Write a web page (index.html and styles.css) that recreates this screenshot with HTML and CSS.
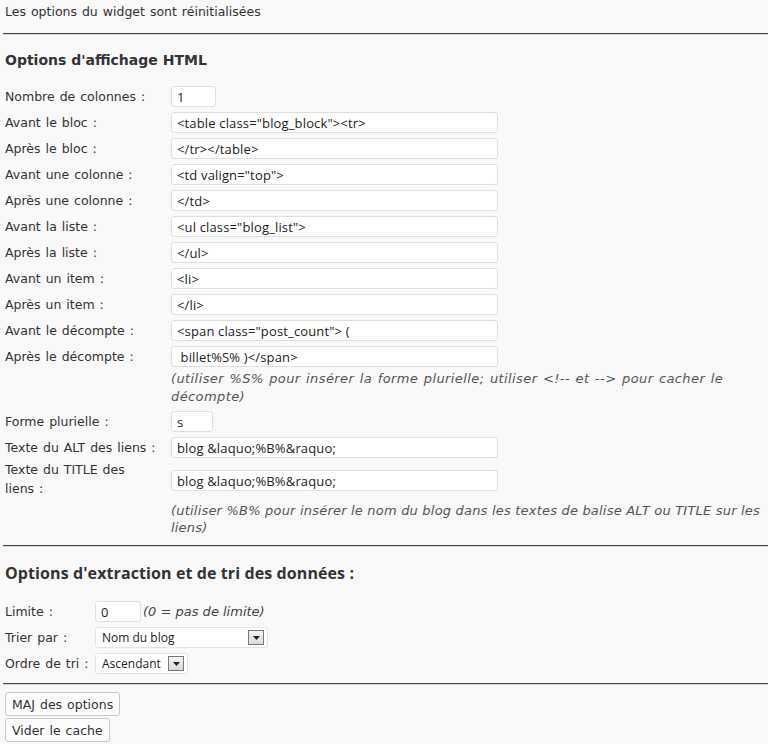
FILE: index.html
```html
<!DOCTYPE html>
<html lang="fr">
<head>
<meta charset="utf-8">
<title>Options du widget</title>
<link rel="stylesheet" href="styles.css">
</head>
<body>
<div class="page">
  <p class="notice">Les options du widget sont réinitialisées</p>
  <hr class="sep">
  <h2 class="h-main">Options d'affichage HTML</h2>
  <div class="grid grid-html">
    <label class="lbl">Nombre de colonnes :</label>
    <div class="fld"><span class="inp inp-xs">1</span></div>
    <label class="lbl">Avant le bloc :</label>
    <div class="fld"><span class="inp inp-wide">&lt;table class="blog_block"&gt;&lt;tr&gt;</span></div>
    <label class="lbl">Après le bloc :</label>
    <div class="fld"><span class="inp inp-wide">&lt;/tr&gt;&lt;/table&gt;</span></div>
    <label class="lbl">Avant une colonne :</label>
    <div class="fld"><span class="inp inp-wide">&lt;td valign="top"&gt;</span></div>
    <label class="lbl">Après une colonne :</label>
    <div class="fld"><span class="inp inp-wide">&lt;/td&gt;</span></div>
    <label class="lbl">Avant la liste :</label>
    <div class="fld"><span class="inp inp-wide">&lt;ul class="blog_list"&gt;</span></div>
    <label class="lbl">Après la liste :</label>
    <div class="fld"><span class="inp inp-wide">&lt;/ul&gt;</span></div>
    <label class="lbl">Avant un item :</label>
    <div class="fld"><span class="inp inp-wide">&lt;li&gt;</span></div>
    <label class="lbl">Après un item :</label>
    <div class="fld"><span class="inp inp-wide">&lt;/li&gt;</span></div>
    <label class="lbl">Avant le décompte :</label>
    <div class="fld"><span class="inp inp-wide">&lt;span class="post_count"&gt; (</span></div>
    <label class="lbl">Après le décompte :</label>
    <div class="fld"><span class="inp inp-wide">&nbsp;billet%S% )&lt;/span&gt;</span></div>
    <p class="help help-1">(utiliser %S% pour insérer la forme plurielle; utiliser &lt;!-- et --&gt; pour cacher le décompte)</p>
    <label class="lbl">Forme plurielle :</label>
    <div class="fld"><span class="inp inp-s">s</span></div>
    <label class="lbl">Texte du ALT des liens :</label>
    <div class="fld"><span class="inp inp-wide">blog &amp;laquo;%B%&amp;raquo;</span></div>
    <label class="lbl lbl-2">Texte du TITLE des liens :</label>
    <div class="fld"><span class="inp inp-wide">blog &amp;laquo;%B%&amp;raquo;</span></div>
    <p class="help help-2">(utiliser %B% pour insérer le nom du blog dans les textes de balise ALT ou TITLE sur les liens)</p>
  </div>
  <hr class="sep">
  <h2 class="h-sub">Options d'extraction et de tri des données :</h2>
  <div class="grid grid-sort">
    <label class="lbl">Limite :</label>
    <div class="fld"><span class="inp inp-lim">0</span><em class="note">(0 = pas de limite)</em></div>
    <label class="lbl">Trier par :</label>
    <div class="fld">
      <span class="sel sel-long"><span class="sel-txt">Nom du blog</span><span class="sel-btn"><svg width="7" height="4" viewBox="0 0 7 4"><path d="M0 0H7L3.5 4Z" fill="#222"/></svg></span></span>
    </div>
    <label class="lbl">Ordre de tri :</label>
    <div class="fld">
      <span class="sel sel-short"><span class="sel-txt">Ascendant</span><span class="sel-btn"><svg width="7" height="4" viewBox="0 0 7 4"><path d="M0 0H7L3.5 4Z" fill="#222"/></svg></span></span>
    </div>
  </div>
  <hr class="sep sep-last">
  <div class="actions">
    <button class="btn" type="button">MAJ des options</button>
    <button class="btn" type="button">Vider le cache</button>
  </div>
</div>
</body>
</html>
```
FILE: styles.css
```css
html, body {
  margin: 0;
  padding: 0;
  background: #f9f9f9;
}
body {
  font-family: "DejaVu Sans", Verdana, sans-serif;
  font-size: 12.5px;
  word-spacing: 1px;
  color: #333;
}
.page {
  padding: 0 0 0 3px;
}
.notice {
  margin: 0;
  padding: 4px 2px 0;
  line-height: 16px;
  height: 23px;
}
.sep {
  margin: 6px 0 0;
  height: 0;
  border: 0;
  border-top: 1px solid #474747;
  border-bottom: 1px solid #d8d8d8;
}
.h-main {
  margin: 0;
  padding: 15px 2px 0;
  font-size: 14px;
  line-height: 20px;
  word-spacing: 0;
  font-weight: bold;
  color: #333;
  height: 40px;
  box-sizing: border-box;
}
.h-sub {
  margin: 0;
  padding: 15px 2px 0;
  font-family: "Open Sans", sans-serif;
  font-size: 16px;
  letter-spacing: 0.1px;
  word-spacing: 0;
  line-height: 22px;
  font-weight: bold;
  color: #333;
  height: 54px;
  box-sizing: border-box;
}
.grid {
  display: grid;
  padding: 0 0 0 2px;
  row-gap: 5px;
  align-items: center;
}
.grid-html {
  grid-template-columns: 166px 1fr;
  margin-top: 11px;
}
.grid-sort {
  grid-template-columns: 90px 1fr;
}
.lbl {
  line-height: 20px;
}
.lbl-2 {
  max-width: 140px;
  line-height: 19px;
  margin-top: -3px;
}
.fld {
  display: flex;
  align-items: center;
  height: 21px;
}
.inp {
  box-sizing: border-box;
  display: inline-flex;
  align-items: center;
  height: 21px;
  padding: 0 5px;
  background: #fff;
  border: 1px solid #dfdfdf;
  border-radius: 3px;
  font-family: "Open Sans", sans-serif;
  font-size: 13px;
  letter-spacing: 0.15px;
  word-spacing: 0;
  color: #222;
  white-space: pre;
}
.inp-xs { width: 45px; }
.inp-s { width: 42px; }
.inp-lim { width: 46px; }
.inp-wide { width: 327px; }
.help {
  grid-column: 2;
  margin: 0;
  font-style: italic;
  font-size: 13px;
  color: #555;
  padding: 0;
}
.help-1 {
  margin-top: -2px;
  line-height: 18px;
  letter-spacing: 0.4px;
  padding-right: 4px;
}
.help-2 {
  margin: -1px 0 3px;
  line-height: 17px;
  letter-spacing: 0.2px;
  word-spacing: 0;
}
.note {
  margin-left: 2px;
  color: #444;
  font-size: 13px;
  word-spacing: 0;
}
.sel {
  box-sizing: border-box;
  display: inline-flex;
  align-items: center;
  justify-content: space-between;
  height: 21px;
  padding: 0 3px 0 6px;
  background: #fff;
  border: 1px solid #e2e2e2;
  border-radius: 3px;
  font-family: "Open Sans", sans-serif;
  font-size: 12px;
  word-spacing: 0;
  color: #222;
}
.sel-long { width: 173px; }
.sel-short { width: 93px; }
.sel-btn {
  box-sizing: border-box;
  width: 16px;
  height: 15px;
  border: 1px solid #777;
  background: linear-gradient(#f4f4f4, #d9d9d9);
  display: flex;
  align-items: center;
  justify-content: center;
}
.sep-last {
  margin-top: 9px;
}
.actions {
  display: flex;
  flex-direction: column;
  align-items: flex-start;
  gap: 2px;
  padding: 7px 0 0 2px;
}
.btn {
  height: 24px;
  padding: 0 6px;
  background: #fcfcfc;
  border: 1px solid #c8c8c8;
  border-radius: 3px;
  font-family: "DejaVu Sans", Verdana, sans-serif;
  font-size: 12.5px;
  word-spacing: 1px;
  color: #333;
}
```
